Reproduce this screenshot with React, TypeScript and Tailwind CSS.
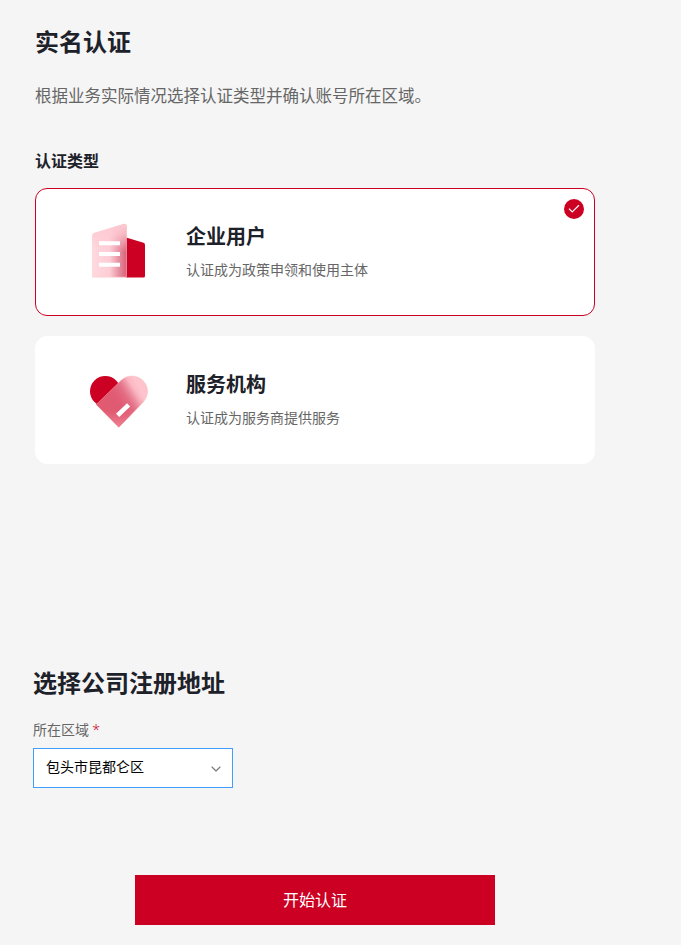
import { Check, ChevronDown } from "lucide-react";
import { clsx } from "clsx";
import { useState, type ReactNode } from "react";

function CompanyIcon() {
  return (
    <svg viewBox="0 0 80 80" className="h-20 w-20">
      <defs>
        <linearGradient id="tower" x1="12" y1="0" x2="46" y2="0" gradientUnits="userSpaceOnUse">
          <stop offset="0" stopColor="#ffd9df" />
          <stop offset="0.52" stopColor="#fdcdd6" />
          <stop offset="0.8" stopColor="#e68ea0" />
          <stop offset="1" stopColor="#d9647b" />
        </linearGradient>
        <linearGradient id="towerTop" x1="0" y1="14" x2="0" y2="42" gradientUnits="userSpaceOnUse">
          <stop offset="0" stopColor="#fecbd4" />
          <stop offset="0.35" stopColor="#fecbd4" stopOpacity="0.8" />
          <stop offset="1" stopColor="#fecbd4" stopOpacity="0" />
        </linearGradient>
      </defs>
      <path d="M46 27.5 63.6 32.8Q65 33.2 65 35V66Q65 67.5 63.5 67.5H46Z" fill="#cc0022" />
      <path
        d="M12.5 67.2V25.3Q12.5 23.8 14 23.2L43.5 14.2Q46.5 13.6 46.5 16.5V67.2Z"
        fill="url(#tower)"
      />
      <path
        d="M12.5 67.2V25.3Q12.5 23.8 14 23.2L43.5 14.2Q46.5 13.6 46.5 16.5V67.2Z"
        fill="url(#towerTop)"
        stroke="#fbcfc8"
        strokeOpacity="0.6"
        strokeWidth="0.9"
      />
      <path d="M19 33.2H40M19 44H40M19 54.8H40" stroke="#fff" strokeWidth="4" />
    </svg>
  );
}

function ServiceIcon() {
  return (
    <svg viewBox="0 0 80 80" className="h-20 w-20">
      <defs>
        <linearGradient id="glass" x1="32" y1="30" x2="54" y2="18" gradientUnits="userSpaceOnUse">
          <stop offset="0" stopColor="#df5971" />
          <stop offset="0.35" stopColor="#e4738a" />
          <stop offset="0.75" stopColor="#fab5c1" />
          <stop offset="1" stopColor="#fec3cd" />
        </linearGradient>
        <linearGradient id="glassTip" x1="0" y1="50" x2="0" y2="72" gradientUnits="userSpaceOnUse">
          <stop offset="0" stopColor="#f07f93" stopOpacity="0" />
          <stop offset="1" stopColor="#f4909f" />
        </linearGradient>
        <linearGradient id="glassBody" x1="38" y1="44" x2="56" y2="30" gradientUnits="userSpaceOnUse">
          <stop offset="0" stopColor="#e05a72" />
          <stop offset="1" stopColor="#e4738a" stopOpacity="0" />
        </linearGradient>
      </defs>
      <circle cx="25.3" cy="31.2" r="15.3" fill="#cc0022" />
      <path
        d="M16.2 44.5 41.2 20.2C47.2 14.4 57 14.6 63 20.6C69 26.6 69.2 35.8 63.2 42.2L38.8 67.3Z"
        fill="url(#glass)"
      />
      <path
        d="M16.2 44.5 41.2 20.2C47.2 14.4 57 14.6 63 20.6C69 26.6 69.2 35.8 63.2 42.2L38.8 67.3Z"
        fill="url(#glassBody)"
      />
      <path
        d="M16.2 44.5 41.2 20.2C47.2 14.4 57 14.6 63 20.6C69 26.6 69.2 35.8 63.2 42.2L38.8 67.3Z"
        fill="url(#glassTip)"
        stroke="#fdb0a8"
        strokeOpacity="0.4"
        strokeWidth="0.8"
      />
      <path d="M37.6 55.4 48.6 44.8" stroke="#fff" strokeWidth="4.6" />
    </svg>
  );
}

interface TypeCardProps {
  icon: ReactNode;
  title: string;
  description: string;
  selected: boolean;
  onSelect: () => void;
}

function TypeCard({ icon, title, description, selected, onSelect }: TypeCardProps) {
  return (
    <button
      type="button"
      onClick={onSelect}
      className={clsx(
        "relative flex h-32 w-full items-start rounded-xl border bg-white pl-11 text-left",
        selected ? "border-[#cc0022]" : "border-white"
      )}
    >
      {icon}
      <div className="ml-[26px] mt-8">
        <h3 className="text-xl leading-[30px] font-bold text-[#1d2129]">{title}</h3>
        <p className="mt-[7px] text-sm leading-[22px] text-[#666]">{description}</p>
      </div>
      {selected && (
        <span className="absolute top-[10px] right-[10px] flex h-5 w-5 items-center justify-center rounded-full bg-[#cc0022] text-white">
          <Check className="h-[14px] w-[14px]" strokeWidth={2} />
        </span>
      )}
    </button>
  );
}

const userTypes = [
  {
    title: "企业用户",
    description: "认证成为政策申领和使用主体",
    icon: <div className="mt-[21px]"><CompanyIcon /></div>,
  },
  {
    title: "服务机构",
    description: "认证成为服务商提供服务",
    icon: <div className="mt-[23px]"><ServiceIcon /></div>,
  },
];

export default function App() {
  const [selected, setSelected] = useState(0);

  return (
    <main className="h-[945px] overflow-hidden bg-[#f5f5f5] px-[35px] pt-[23px] font-['Noto_Sans_CJK_SC',sans-serif] text-[#1d2129]">
      <h1 className="text-2xl leading-9 font-bold">实名认证</h1>
      <p className="mt-6 text-[16.5px] leading-6 text-[#666]">
        根据业务实际情况选择认证类型并确认账号所在区域。
      </p>
      <h2 className="mt-[41px] text-base leading-6 font-bold">认证类型</h2>
      <div className="mt-4 w-[560px] space-y-5">
        {userTypes.map((type, index) => (
          <TypeCard
            key={type.title}
            {...type}
            selected={selected === index}
            onSelect={() => setSelected(index)}
          />
        ))}
      </div>

      <section className="-ml-0.5 mt-[200px]">
        <h2 className="text-2xl leading-9 font-bold">选择公司注册地址</h2>
        <p className="mt-[18px] h-[22px] text-sm leading-[22px] text-[#666]">
          所在区域 <span className="font-['Noto_Sans'] leading-none font-light text-[#cc0022]">*</span>
        </p>
        <button
          type="button"
          className="mt-2 flex h-10 w-[200px] items-center justify-between border border-[#409eff] bg-white pr-2 pl-3 text-sm text-black"
        >
          <span className="pb-1">包头市昆都仑区</span>
          <ChevronDown className="mt-px h-4 w-4 text-[#777]" strokeWidth={1.6} />
        </button>
      </section>

      <button
        type="button"
        className="mt-[87px] ml-[100px] block h-[50px] w-[360px] bg-[#cc0022] pb-0.5 text-base text-white"
      >
        开始认证
      </button>
    </main>
  );
}
